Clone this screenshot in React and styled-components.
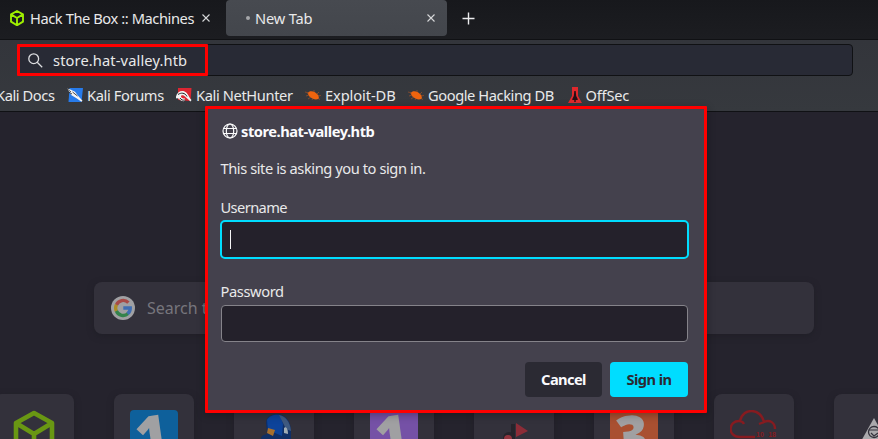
import React from "react";
import styled, { createGlobalStyle } from "styled-components";

const Global = createGlobalStyle`
  * { box-sizing: border-box; }
  body { margin: 0; background: #25232d; overflow: hidden; font-family: "Noto Sans", sans-serif; }
  svg { display: block; flex: none; }
`;

const Browser = styled.div`
  position: relative;
  display: flex;
  flex-direction: column;
  width: 878px;
  height: 439px;
  overflow: hidden;
  background: #25232d;
`;
const Label = styled.span`
  display: inline-block;
  flex: none;
  white-space: pre;
  font-family: "Noto Sans", sans-serif;
  font-size: ${(p) => p.$size || 14.67}px;
  font-weight: ${(p) => p.$weight || 400};
  line-height: 20px;
  letter-spacing: ${(p) => p.$spacing || 0}px;
  color: ${(p) => p.$color || "#e9e9ea"};
`;
const TabBar = styled.header`
  display: flex;
  height: 40px;
  flex: none;
  background: linear-gradient(#17181c, #1c1d21);
  border-bottom: 1px solid #101114;
`;
const Tab = styled.div`
  display: flex;
  align-items: center;
  width: ${(p) => p.$width}px;
  height: 36px;
  padding: 0 ${(p) => p.$right}px 0 ${(p) => p.$left}px;
  border-radius: 4px;
  background: ${(p) => (p.$active ? "linear-gradient(#474a50, #43464c)" : "transparent")};
`;
const TabTitle = styled(Label)`
  flex: 1;
  margin-left: ${(p) => p.$gap}px;
`;
const LoadingDot = styled.i`
  width: 4px;
  height: 4px;
  border-radius: 50%;
  background: #a6a7aa;
`;
const NewTab = styled.div`
  padding: 12px 0 0 15px;
`;
const Toolbar = styled.div`
  height: 72px;
  flex: none;
  padding-top: 4px;
  background: linear-gradient(#33353b, #36393e);
  border-bottom: 1px solid #101114;
`;
const UrlBar = styled.div`
  width: 835px;
  height: 32px;
  margin-left: 18px;
  border: 1px solid #101114;
  border-radius: 4px;
  background: #282a35;
`;
const UrlHighlight = styled.div`
  display: flex;
  align-items: center;
  width: 191px;
  height: 32px;
  margin: -1px 0 0 -2px;
  padding-left: 8px;
  border: 3px solid #ff0000;
  border-radius: 1px;
  gap: 10px;
`;
const Bookmarks = styled.nav`
  display: flex;
  height: 35px;
  padding-top: 9px;
  margin-left: -4px;
`;
const Bookmark = styled.div`
  display: flex;
  width: ${(p) => p.$width}px;
  flex: none;
  gap: 4px;
  align-items: center;
  height: 20px;
`;
const Content = styled.main`
  flex: 1;
  padding-top: 170px;
`;
const Search = styled.div`
  display: flex;
  align-items: center;
  width: 720px;
  height: 52px;
  margin-left: 94px;
  padding: 0 0 1px 17px;
  gap: 12px;
  border-radius: 8px;
  background: #33313b;
  box-shadow: 0 2px 6px #201f27;
`;
const Tiles = styled.div`
  display: flex;
  gap: 40px;
  margin: 60px 0 0 -6px;
`;
const Tile = styled.div`
  width: 80px;
  height: 80px;
  flex: none;
  padding: 16px;
  border-radius: 8px;
  background: #33313b;
  box-shadow: 0 2px 6px #201f27;
`;
const Numbered = styled.div`
  width: 48px;
  height: 48px;
  overflow: hidden;
  border-radius: 4px 4px 0 0;
  background: ${(p) => p.$bg};
  color: #a0a0a2;
  font: 900 56px/48px "Noto Sans", sans-serif;
  text-align: center;
`;
const Digit = styled.span`
  display: block;
  width: 43px;
  transform: rotate(${(p) => p.$turn}deg);
`;
const Dialog = styled.section`
  position: absolute;
  left: 205px;
  top: 106px;
  width: 502px;
  height: 307px;
  padding: 12px 16px 0 12px;
  border: 3px solid #ff0000;
  border-radius: 1px;
  background: #44414d;
  display: flex;
  flex-direction: column;
  box-shadow: 0 2px 8px rgba(0, 0, 0, 0.3);
`;
const Site = styled.div`
  display: flex;
  align-items: center;
  gap: 3px;
  height: 20px;
  padding-left: 2px;
`;
const Message = styled.div`
  display: flex;
  height: 20px;
  margin-top: 17px;
  padding-left: 0.5px;
`;
const FieldName = styled.label`
  display: flex;
  height: 20px;
  margin-top: ${(p) => p.$top}px;
  padding-left: 0.5px;
`;
const Field = styled.div`
  display: flex;
  align-items: center;
  width: ${(p) => (p.$focus ? 469 : 467)}px;
  height: ${(p) => (p.$focus ? 39 : 37)}px;
  margin: ${(p) => (p.$focus ? "3px 0 0 0" : "4px 0 0 1px")};
  padding-left: 8px;
  border: ${(p) => (p.$focus ? "2px solid #00ddff" : "1px solid #85838a")};
  border-radius: ${(p) => (p.$focus ? 5 : 4)}px;
  background: #24212b;
`;
const Caret = styled.i`
  width: 1px;
  height: 19px;
  background: #f5f5f6;
`;
const Actions = styled.div`
  display: flex;
  justify-content: flex-end;
  gap: 8px;
  margin-top: 20px;
`;
const Button = styled.button`
  display: flex;
  justify-content: center;
  width: ${(p) => p.$width}px;
  height: 35px;
  padding: 7px 0 0;
  border: 0;
  border-radius: 4px;
  background: ${(p) => (p.$primary ? "#00ddff" : "#2b2a33")};
`;

const Close = () => (
  <svg width="8" height="8" viewBox="0 0 8 8" stroke="#d7d8da" strokeWidth="1.1"><path d="M.5.5l7 7M7.5.5l-7 7" /></svg>
);
const Box = ({ size, color, width }) => (
  <svg width={size} height={size} viewBox="0 0 48 48" fill="none" stroke={color} strokeWidth={width} strokeLinejoin="round">
    <path d="M24 3L42 13V35L24 46L6 35V13ZM6 13L24 24L42 13M24 24V46" />
  </svg>
);
const Globe = () => (
  <svg width="16" height="16" viewBox="0 0 16 16" fill="none" stroke="#fbfbfc" strokeWidth="1.2">
    <circle cx="8" cy="8" r="7" /><ellipse cx="8" cy="8" rx="3.7" ry="7" /><path d="M1.4 5.5h13.2M1.4 10.5h13.2" />
  </svg>
);
const ForumIcon = () => (
  <svg width="16" height="16" viewBox="0 0 16 16">
    <path d="M2.5 1H16l-1.5 14H1.5z" fill="#277bea" />
    <path d="M0 1.5l4 1.2 4 2 3 4 4.5 5-1 1-5-3.5-5-3z" fill="#f5f5f5" />
    <path d="M0 1.8l4 3.2M2 5.3l3 1.7M5.5 5l5 4" stroke="#17191d" strokeWidth=".8" />
  </svg>
);
const HunterIcon = () => (
  <svg width="16" height="16" viewBox="0 0 16 16">
    <path d="M2 1h13.5L14.5 14 2 13z" fill="#dc2632" />
    <path d="M0 9.5C1 5 5 3 8.5 4.5c4 2 3 4 7 8.5l-1 1.5L9 9.5C7 7.5 5 8 5 9.5s2 2 4 2v2.5c-6 1-5-4-9-2.5z" fill="#f4f4f4" />
    <path d="M2 7.5c3-2 7-2 9 2M4 11c1 2 3 2.5 5 2" stroke="#202126" fill="none" />
  </svg>
);
const Bug = () => (
  <svg width="16" height="16" viewBox="0 0 16 16">
    <path d="M2.5 6C5 3 10 4 13.5 8.5l.5 3C10 14 4 11 2.5 6z" fill="#ef640e" />
    <path d="M4 6L0 5m4 3L1 9m5 1l-3 2m5-1l-1 2m2-8l0-2m3 4l2-2m-1 4l3-.5m-3 3l2 1" stroke="#9e5229" strokeWidth=".7" fill="none" />
  </svg>
);
const OffSecIcon = () => (
  <svg width="14" height="16" viewBox="0 0 14 16">
    <path d="M4 0h6v9l4 7H0l4-7z" fill="#df282c" />
    <path d="M6.3 4h1.4l.5 5 1.5 3v1h-2v2H6.3v-2h-2v-1l1.5-3z" fill="#220f15" />
  </svg>
);
const Google = () => (
  <svg width="24" height="24" viewBox="0 0 24 24">
    <circle cx="12" cy="12" r="12" fill="#a0a0a3" />
    <g fill="none" strokeWidth="3.3">
      <path d="M17.4 6.7A7.3 7.3 0 0 0 5.4 9" stroke="#a84a46" />
      <path d="M5.4 8.8a7.3 7.3 0 0 0 0 6.4" stroke="#ad8b25" />
      <path d="M5.4 15a7.3 7.3 0 0 0 11.7 2.5" stroke="#34834b" />
      <path d="M12.3 12h7a7.3 7.3 0 0 1-2.7 5.8" stroke="#3f6eb3" />
    </g>
  </svg>
);
const Bird = () => (
  <svg width="48" height="48" viewBox="0 0 48 48">
    <path d="M11 29c0-4 3-4 6-5l-1-11c0-6 5-9 12-9 9 1 13 9 13 17v8l1 17H11z" fill="#102f66" />
    <path d="M17 10c2-5 9-6 13-5l3 9-1 12-14-6z" fill="#0d439a" />
    <path d="M29 5c6 1 11 6 12 16l-5-2z" fill="#3f5a80" />
    <path d="M34 18c2-2 4 1 4 6l-4-1z" fill="#a0acb4" />
    <path d="M18 18l7 2-2 6-6-3z" fill="#a8702c" />
  </svg>
);
const Note = () => (
  <svg width="48" height="48" viewBox="0 0 48 48">
    <path d="M23 14v15" stroke="#26242b" strokeWidth="4" />
    <circle cx="19" cy="28" r="6" fill="#26242b" />
    <circle cx="18" cy="29" r="4" fill="#93343e" />
    <path d="M26 13l12 8-12 6z" fill="#8c2c37" />
  </svg>
);
const Cloud = () => (
  <svg width="48" height="48" viewBox="0 0 48 48">
    <path d="M25 27H10C-3 27-2 10 10 11C13-3 31-2 34 12c6-3 11 1 11 7M9 11c2 0 4 1 5 3M34 12l-5 2" stroke="#861b20" strokeWidth="2.4" fill="none" />
    <text x="26" y="27" fill="#861b20" fontSize="7" fontWeight="700" fontFamily="Liberation Sans, sans-serif" wordSpacing="2.5">10 18</text>
  </svg>
);
const Badge = () => (
  <svg width="48" height="48" viewBox="0 0 48 48">
    <path d="M24 8L5 42h38z" fill="#aaa9ac" />
    <circle cx="24" cy="22" r="5.5" fill="none" stroke="#33313b" strokeWidth="1.3" />
    <path d="M19 20h10M21 23l3 3 4-3M15 30h18" stroke="#33313b" strokeWidth="1.2" fill="none" />
  </svg>
);

const bookmarks = [
  { name: "Kali Docs", width: 71, spacing: -0.42 },
  { name: "Kali Forums", width: 109, spacing: -0.38, Icon: ForumIcon },
  { name: "Kali NetHunter", width: 129, spacing: -0.38, Icon: HunterIcon },
  { name: "Exploit-DB", width: 103, spacing: -0.1, Icon: Bug },
  { name: "Google Hacking DB", width: 159.5, spacing: -0.42, Icon: Bug },
  { name: "OffSec", width: 80, spacing: -0.2, Icon: OffSecIcon },
];

export default function App() {
  return (
    <Browser>
      <Global />
      <TabBar>
        <Tab $width={226} $left={9} $right={16}>
          <Box size={16} color="#9fef00" width={5.6} />
          <TabTitle $gap={5} $spacing={-0.42}>Hack The Box :: Machines</TabTitle>
          <Close />
        </Tab>
        <Tab $active $width={221} $left={20} $right={12}>
          <LoadingDot />
          <TabTitle $gap={5} $spacing={-0.2}>New Tab</TabTitle>
          <Close />
        </Tab>
        <NewTab><svg width="13" height="13" viewBox="0 0 13 13" stroke="#ececed" strokeWidth="1.4"><path d="M6.5.5v12M.5 6.5h12" /></svg></NewTab>
      </TabBar>
      <Toolbar>
        <UrlBar>
          <UrlHighlight>
            <svg width="15" height="15" viewBox="0 0 15 15" fill="none" stroke="#dcdde0" strokeWidth="1.3"><circle cx="5.7" cy="5.7" r="4.9" /><path d="M9.2 9.2l5 5" /></svg>
            <Label $spacing={0.12}>store.hat-valley.htb</Label>
          </UrlHighlight>
        </UrlBar>
        <Bookmarks>
          {bookmarks.map(({ name, width, spacing, Icon }) => (
            <Bookmark key={name} $width={width}>{Icon && <Icon />}<Label $spacing={spacing}>{name}</Label></Bookmark>
          ))}
        </Bookmarks>
      </Toolbar>
      <Content>
        <Search><Google /><Label $size={16} $color="#77767d">Search t</Label></Search>
        <Tiles>
          <Tile><Box size={48} color="#699713" width={4.6} /></Tile>
          <Tile><Numbered $bg="#0e609b"><Digit $turn={-8}>1</Digit></Numbered></Tile>
          <Tile><Bird /></Tile>
          <Tile><Numbered $bg="#7551a6"><Digit $turn={-8}>1</Digit></Numbered></Tile>
          <Tile><Note /></Tile>
          <Tile><Numbered $bg="#a95031"><Digit $turn={-4}>3</Digit></Numbered></Tile>
          <Tile><Cloud /></Tile>
          <Tile><Badge /></Tile>
        </Tiles>
      </Content>
      <Dialog>
        <Site><Globe /><Label $weight={700} $spacing={-0.47} $color="#fbfbfe">store.hat-valley.htb</Label></Site>
        <Message><Label $spacing={-0.43}>This site is asking you to sign in.</Label></Message>
        <FieldName $top={19}><Label $spacing={-0.6}>Username</Label></FieldName>
        <Field $focus><Caret /></Field>
        <FieldName $top={22}><Label $spacing={-0.38}>Password</Label></FieldName>
        <Field />
        <Actions>
          <Button $width={77}><Label $weight={700} $spacing={-0.6} $color="#fbfbfe">Cancel</Label></Button>
          <Button $width={78} $primary><Label $weight={700} $spacing={-0.6} $color="#2b2a33">Sign in</Label></Button>
        </Actions>
      </Dialog>
    </Browser>
  );
}
